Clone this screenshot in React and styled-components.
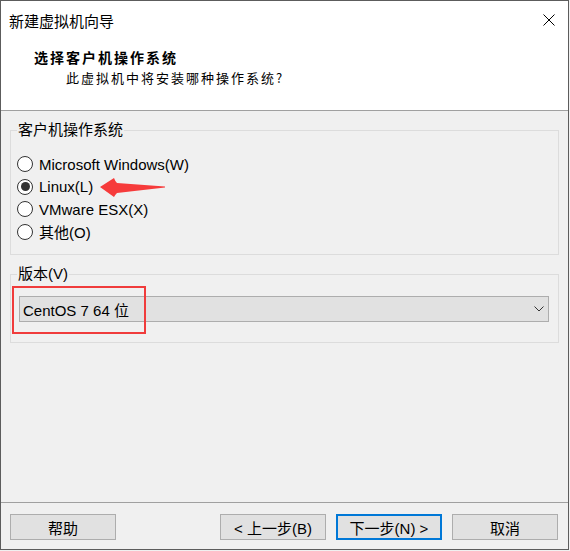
import React from "react";
import styled, { createGlobalStyle } from "styled-components";

const GlobalStyle = createGlobalStyle`
  html, body {
    margin: 0;
    padding: 0;
    background: #f0f0f0;
  }
  body {
    font-family: "Liberation Sans", "Noto Sans CJK SC", sans-serif;
  }
  * {
    box-sizing: border-box;
  }
`;

const cjk = `"Noto Sans CJK SC", "Liberation Sans", sans-serif`;
const ui = `"Liberation Sans", "Noto Sans CJK SC", sans-serif`;

const Window = styled.div`
  width: 569px;
  height: 550px;
  border: 1px solid #5c5c5c;
  display: flex;
  flex-direction: column;
  background: #f0f0f0;
  color: #000;
  font-family: ${ui};
  font-size: 15px;
`;

const Header = styled.header`
  height: 110px;
  flex-shrink: 0;
  background: #fff;
  border-bottom: 1px solid #a0a0a0;
`;

const TitleBar = styled.div`
  height: 38px;
  display: flex;
  align-items: center;
  justify-content: space-between;
  padding: 0 13px 0 8px;
`;

const Title = styled.span`
  font-family: ${cjk};
  font-size: 15px;
  line-height: 1;
`;

const CloseButton = styled.span`
  display: flex;
  width: 12px;
  height: 12px;
`;

const Intro = styled.div`
  margin-top: 8px;
  padding-left: 33px;
`;

const Heading = styled.div`
  font-family: ${cjk};
  font-size: 14px;
  font-weight: 700;
  letter-spacing: 2px;
  line-height: 20px;
`;

const Subheading = styled.div`
  margin-top: 1px;
  padding-left: 32px;
  font-family: ${cjk};
  font-size: 13px;
  letter-spacing: 2px;
  line-height: 20px;
`;

const Body = styled.main`
  flex: 1;
  padding: 10px 9px 0;
`;

const Group = styled.fieldset`
  margin: 0;
  min-inline-size: 0;
  border: 1px solid #dcdcdc;
  padding: ${(p) => p.$pad};

  & + & {
    margin-top: 10px;
  }
`;

const Legend = styled.legend`
  padding: 0 1px;
  font-size: 15px;
  line-height: 18px;
`;

const RadioRow = styled.label`
  position: relative;
  display: flex;
  align-items: center;
  height: 22.5px;
  font-size: 15px;
`;

const RadioMark = styled.span`
  width: 16px;
  height: 16px;
  margin-right: 6px;
  border-radius: 50%;
  border: 1px solid #333;
  background: #fff;
  display: flex;
  align-items: center;
  justify-content: center;

  &::after {
    content: "";
    display: ${(p) => (p.$checked ? "block" : "none")};
    width: 9px;
    height: 9px;
    border-radius: 50%;
    background: #333;
  }
`;

const Pointer = styled.svg`
  position: absolute;
  left: 83px;
  top: 0;
`;

const SelectWrap = styled.div`
  position: relative;
  margin-left: 2px;
`;

const SelectBox = styled.div`
  height: 26px;
  display: flex;
  align-items: center;
  justify-content: space-between;
  padding: 0 4px 0 3px;
  background: #e1e1e1;
  border: 1px solid #adadad;
  font-size: 15px;
`;

const Highlight = styled.div`
  position: absolute;
  left: -7px;
  top: -10px;
  width: 134px;
  height: 48px;
  border: 2px solid #f03c3c;
  pointer-events: none;
`;

const Footer = styled.footer`
  height: 47px;
  flex-shrink: 0;
  display: flex;
  gap: 10px;
  padding: 11px 10px 0 9px;
  border-top: 1px solid #a0a0a0;
`;

const Button = styled.button`
  width: 106px;
  height: 26px;
  padding: 0;
  background: #e1e1e1;
  border: ${(p) => (p.$primary ? "2px solid #0078d7" : "1px solid #adadad")};
  color: #000;
  font-family: ${ui};
  font-size: 15px;

  &:first-child {
    margin-right: auto;
  }
`;

const osOptions = [
  { label: "Microsoft Windows(W)" },
  { label: "Linux(L)", checked: true, pointer: true },
  { label: "VMware ESX(X)" },
  { label: "其他(O)" },
];

export default function App() {
  return (
    <>
      <GlobalStyle />
      <Window>
        <Header>
          <TitleBar>
            <Title>新建虚拟机向导</Title>
            <CloseButton>
              <svg width="12" height="12" viewBox="0 0 12 12">
                <path d="M0.5 0.5 L11.5 11.5 M11.5 0.5 L0.5 11.5" stroke="#000" strokeWidth="1" fill="none" />
              </svg>
            </CloseButton>
          </TitleBar>
          <Intro>
            <Heading>选择客户机操作系统</Heading>
            <Subheading>此虚拟机中将安装哪种操作系统?</Subheading>
          </Intro>
        </Header>

        <Body>
          <Group $pad="14px 6px 11px">
            <Legend>客户机操作系统</Legend>
            {osOptions.map((o) => (
              <RadioRow key={o.label}>
                <RadioMark $checked={o.checked} />
                {o.label}
                {o.pointer && (
                  <Pointer width="66" height="22" viewBox="0 0 66 22">
                    <path
                      d="M0 11 L14 2 Q15 5 17 7 L65 10.5 L65 11.5 L17 17 Q15 19 14 21 Z"
                      fill="#f63b3b"
                    />
                  </Pointer>
                )}
              </RadioRow>
            ))}
          </Group>

          <Group $pad="13px 9px 20px 6px">
            <Legend>版本(V)</Legend>
            <SelectWrap>
              <SelectBox>
                <span>CentOS 7 64 位</span>
                <svg width="10" height="6" viewBox="0 0 10 6">
                  <path d="M0.5 0.5 L5 5 L9.5 0.5" stroke="#333" strokeWidth="1" fill="none" />
                </svg>
              </SelectBox>
              <Highlight />
            </SelectWrap>
          </Group>
        </Body>

        <Footer>
          <Button>帮助</Button>
          <Button>&lt; 上一步(B)</Button>
          <Button $primary>下一步(N) &gt;</Button>
          <Button>取消</Button>
        </Footer>
      </Window>
    </>
  );
}
